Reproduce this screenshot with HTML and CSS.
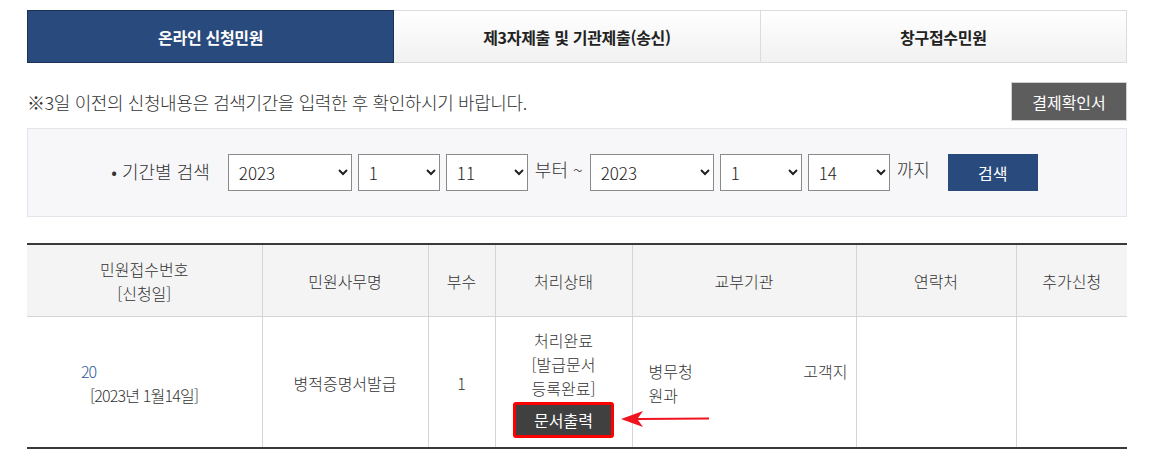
FILE: index.html
```html
<!DOCTYPE html>
<html lang="ko">
<head>
	<meta charset="utf-8">
	<title>민원신청내역</title>
	<link rel="stylesheet" href="styles.css">
</head>
<body>
	<div class="wrap">
		<ul class="tabs">
			<li class="on">온라인 신청민원</li>
			<li>제3자제출 및 기관제출(송신)</li>
			<li>창구접수민원</li>
		</ul>

		<div class="notice-row">
			<p class="notice">※3일 이전의 신청내용은 검색기간을 입력한 후 확인하시기 바랍니다.</p>
			<button class="btn-gray">결제확인서</button>
		</div>

		<div class="search-box">
			<span class="label">• 기간별 검색</span>
			<select class="sel-year"><option>2023</option></select>
			<select class="sel-day"><option>1</option></select>
			<select class="sel-day"><option>11</option></select>
			<span class="txt">부터 ~</span>
			<select class="sel-year"><option>2023</option></select>
			<select class="sel-day"><option>1</option></select>
			<select class="sel-day"><option>14</option></select>
			<span class="txt">까지</span>
			<button class="btn-search">검색</button>
		</div>

		<table class="list">
			<colgroup>
				<col style="width:235px">
				<col style="width:166px">
				<col style="width:67px">
				<col style="width:137px">
				<col style="width:224px">
				<col style="width:160px">
				<col style="width:111px">
			</colgroup>
			<thead>
				<tr>
					<th>민원접수번호<br>[신청일]</th>
					<th>민원사무명</th>
					<th>부수</th>
					<th>처리상태</th>
					<th>교부기관</th>
					<th>연락처</th>
					<th>추가신청</th>
				</tr>
			</thead>
			<tbody>
				<tr>
					<td class="no">
						<span class="num">20</span>
						<span class="date">[2023년 1월14일]</span>
					</td>
					<td>병적증명서발급</td>
					<td>1</td>
					<td class="status">
						처리완료<br>[발급문서<br>등록완료]<br>
						<span class="print-wrap">
							<button class="btn-print">문서출력</button>
							<svg class="arrow" width="90" height="20" viewBox="0 0 90 20">
								<polygon points="0,10 22,2 17,9 88,8.6 88,10.4 17,11 22,18" fill="#f0141e"/>
							</svg>
						</span>
					</td>
					<td class="office">
						<div class="office-line"><span>병무청</span><span>고객지</span></div>
						<div>원과</div>
					</td>
					<td></td>
					<td></td>
				</tr>
			</tbody>
		</table>
	</div>
</body>
</html>
```

FILE: styles.css
```css
body {
	margin: 0;
	background: #fff;
	font-family: "Noto Sans CJK KR", "Noto Sans", sans-serif;
	color: #333;
}

.wrap {
	width: 1100px;
	padding: 10px 0 0 27px;
}

/* tabs */
.tabs {
	display: flex;
	margin: 0;
	padding: 0;
	list-style: none;
}

.tabs li {
	flex: 1;
	height: 51px;
	display: flex;
	align-items: center;
	justify-content: center;
	font-size: 16px;
	font-weight: bold;
	color: #222;
	border: 1px solid #dcdcdc;
	border-left: none;
	background: linear-gradient(#fff, #f1f1f1);
	letter-spacing: -0.3px;
}

.tabs li.on {
	background: #294a7c;
	border: 1px solid #1b3258;
	color: #fff;
}

/* notice */
.notice-row {
	display: flex;
	align-items: center;
	justify-content: space-between;
	margin-top: 19px;
}

.notice {
	margin: 0;
	font-size: 18px;
	font-weight: 300;
	color: #333;
	letter-spacing: -0.4px;
}

.btn-gray {
	width: 116px;
	height: 39px;
	background: #5d5d5d;
	border: 1px solid #cfcfcf;
	color: #fff;
	font-family: inherit;
	font-size: 16px;
	padding: 0;
}

/* search */
.search-box {
	margin-top: 7px;
	height: 87px;
	border: 1px solid #e4e4ea;
	background: #f7f7f9;
	display: flex;
	align-items: center;
	justify-content: center;
	gap: 6px;
	padding-right: 5px;
}

.search-box .label {
	font-size: 18px;
	font-weight: 300;
	margin-right: 12px;
	margin-bottom: 4px;
}

.search-box select {
	height: 37px;
	border: 1px solid #8a8a8a;
	background: #fff;
	font-family: inherit;
	font-size: 17px;
	font-weight: 300;
	color: #222;
	padding: 0 4px 0 6px;
	border-radius: 0;
}

.sel-year {
	width: 124px;
}

.sel-day {
	width: 82px;
}

.search-box .txt {
	font-size: 18px;
	font-weight: 300;
	margin: 0 1px 8px;
}

.btn-search {
	margin-left: 11px;
	width: 90px;
	height: 37px;
	border: none;
	background: #294a7c;
	color: #fff;
	font-family: inherit;
	font-size: 16px;
}

/* table */
.list {
	margin-top: 26px;
	width: 1100px;
	border-collapse: collapse;
	table-layout: fixed;
	border-top: 2px solid #3a3a3a;
	border-bottom: 2px solid #3a3a3a;
}

.list th,
.list td {
	font-size: 16px;
	font-weight: 300;
	line-height: 24px;
	text-align: center;
	border-left: 1px solid #d5d5d5;
	color: #333;
}

.list th:first-child,
.list td:first-child {
	border-left: none;
}

.list th {
	height: 71px;
	padding: 0;
	background: #f4f4f4;
	border-bottom: 1px solid #d5d5d5;
}

.list td {
	height: 111px;
	padding: 10px 0 9px;
	vertical-align: middle;
}

.list td.no {
	text-align: left;
	padding-left: 54px;
}

.no .num {
	display: block;
	color: #2d5a9c;
	letter-spacing: -1px;
}

.no .date {
	display: block;
	padding-left: 9px;
	letter-spacing: -0.8px;
}

.print-wrap {
	position: relative;
	display: inline-block;
	margin-top: 2px;
}

.btn-print {
	width: 101px;
	height: 36px;
	border: 3px solid #f00;
	border-radius: 3px;
	background: #404040;
	color: #fff;
	font-family: inherit;
	font-size: 16px;
	padding: 0;
	vertical-align: top;
}

.arrow {
	position: absolute;
	left: 108px;
	top: 7px;
}

.list td.office {
	text-align: left;
	padding-left: 16px;
	padding-right: 8px;
}

.office-line {
	display: flex;
	justify-content: space-between;
}
```
